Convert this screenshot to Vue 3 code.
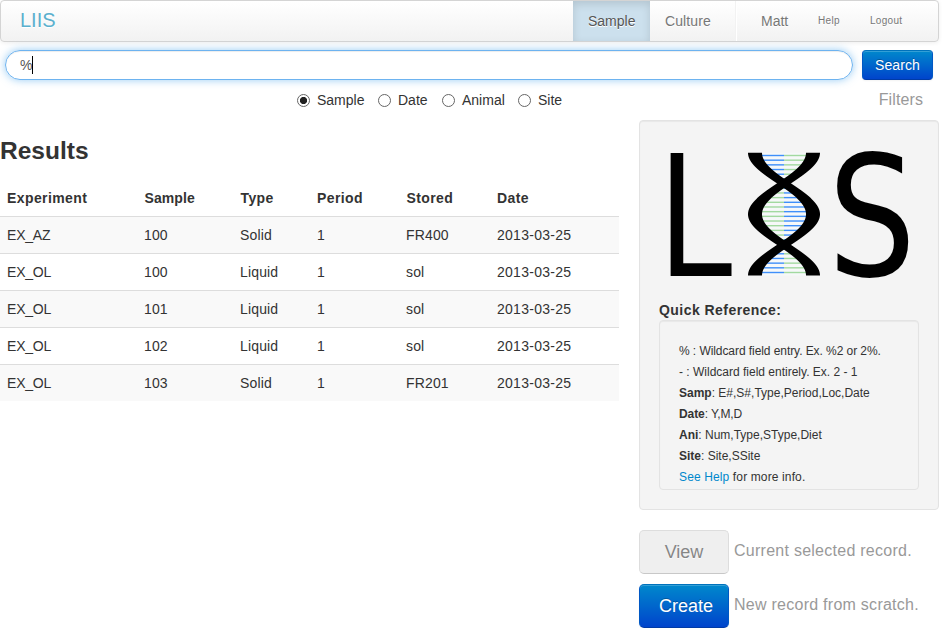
<script setup>
import { ref } from 'vue'

const query = ref('%')
const mode = ref('Sample')
const modes = ['Sample', 'Date', 'Animal', 'Site']
const columns = ['Experiment', 'Sample', 'Type', 'Period', 'Stored', 'Date']
const rows = [
  ['EX_AZ', '100', 'Solid', '1', 'FR400', '2013-03-25'],
  ['EX_OL', '100', 'Liquid', '1', 'sol', '2013-03-25'],
  ['EX_OL', '101', 'Liquid', '1', 'sol', '2013-03-25'],
  ['EX_OL', '102', 'Liquid', '1', 'sol', '2013-03-25'],
  ['EX_OL', '103', 'Solid', '1', 'FR201', '2013-03-25'],
]

// Helix geometry inside the 260x150 logo canvas
const cx = 125
const top = 12.8
const height = 122.7
const swing = (y) => 29 * Math.cos((2 * Math.PI * (y - top)) / height)

function strand(sign) {
  const left = []
  const right = []
  for (let i = 0; i <= 98; i++) {
    const y = top + (height * i) / 98
    const x = cx + sign * swing(y)
    left.push(`${(x - 7).toFixed(2)},${y.toFixed(2)}`)
    right.unshift(`${(x + 7).toFixed(2)},${y.toFixed(2)}`)
  }
  return [...left, ...right].join(' ')
}

function lens() {
  const a = []
  const b = []
  for (let i = 0; i <= 98; i++) {
    const y = top + (height * i) / 98
    a.push(`${(cx - Math.abs(swing(y))).toFixed(2)},${y.toFixed(2)}`)
    b.unshift(`${(cx + Math.abs(swing(y))).toFixed(2)},${y.toFixed(2)}`)
  }
  return [...a, ...b].join(' ')
}

const rungs = Array.from({ length: 26 }, (_, i) => {
  const y = 14.8 + i * 4.68
  const s = swing(y)
  return { y, w: Math.abs(s), left: s > 0 ? '#3f8ffa' : '#a2d9a0', right: s > 0 ? '#a2d9a0' : '#3f8ffa' }
})
</script>

<template>
  <div class="page">
    <nav class="navbar">
      <a class="brand">LIIS</a>
      <a class="tab active">Sample</a>
      <a class="tab culture">Culture</a>
      <span class="divider"></span>
      <a class="user">Matt</a>
      <a class="small help">Help</a>
      <a class="small logout">Logout</a>
    </nav>

    <div class="searchbar">
      <div class="query"><span>{{ query }}</span><i class="caret"></i></div>
      <button class="btn primary search">Search</button>
    </div>

    <div class="options">
      <div class="modes">
        <label v-for="m in modes" :key="m" :class="['mode', m.toLowerCase()]">
          <span class="dot" :class="{ on: m === mode }"></span><span>{{ m }}</span>
        </label>
      </div>
      <span class="filters">Filters</span>
    </div>

    <div class="main">
      <section class="results">
        <h2>Results</h2>
        <div class="row head">
          <span v-for="c in columns" :key="c" :class="'h-' + c.toLowerCase()">{{ c }}</span>
        </div>
        <div v-for="(r, i) in rows" :key="i" class="row" :class="{ odd: i % 2 === 0 }">
          <span v-for="(v, j) in r" :key="j">{{ v }}</span>
        </div>
      </section>

      <aside class="side">
        <div class="well">
          <svg class="logo" width="260" height="150" viewBox="0 0 260 150">
            <text class="letter" transform="translate(-3.2 136) scale(.885 1)">L</text>
            <polygon :points="lens()" fill="#f6f8f9" />
            <g v-for="(r, i) in rungs" :key="i">
              <rect :x="cx - r.w" :y="r.y" :width="r.w" height="1.4" :fill="r.left" />
              <rect :x="cx" :y="r.y" :width="r.w" height="1.4" :fill="r.right" />
            </g>
            <polygon :points="strand(1)" />
            <polygon :points="strand(-1)" />
            <text class="letter curved" transform="translate(169 136) scale(.824 1)">S</text>
          </svg>
          <h5>Quick Reference:</h5>
          <div class="well inner">
            <p class="l1">% : Wildcard field entry. Ex. %2 or 2%.</p>
            <p>- : Wildcard field entirely. Ex. 2 - 1</p>
            <p><b>Samp</b>: E#,S#,Type,Period,Loc,Date</p>
            <p class="l4"><b>Date</b>: Y,M,D</p>
            <p><b>Ani</b>: Num,Type,SType,Diet</p>
            <p><b>Site</b>: Site,SSite</p>
            <p class="l7"><a>See Help</a> for more info.</p>
          </div>
        </div>
        <div class="action">
          <button class="btn large disabled">View</button>
          <span class="note">Current selected record.</span>
        </div>
        <div class="action">
          <button class="btn large primary">Create</button>
          <span class="note">New record from scratch.</span>
        </div>
      </aside>
    </div>
  </div>
</template>

<style>
body { background: #fff; overflow: hidden; }
</style>

<style scoped>
.page { width: 939px; font: 14px/20px "Liberation Sans", Arial, sans-serif; color: #333; }
.page * { box-sizing: border-box; }
.navbar {
  display: flex; height: 42px; border: 1px solid #d4d4d4; border-radius: 4px; padding-left: 19px;
  background: linear-gradient(#fff, #f2f2f2); box-shadow: 0 1px 4px rgba(0, 0, 0, .067);
  line-height: 40px; color: #777; text-shadow: 0 1px 0 #fff;
}
.brand { width: 553px; font-size: 20px; line-height: 39px; color: #5bb0ce; }
.tab { width: 77px; padding-left: 15px; }
.tab.active { background: #cce0ed; color: #555; box-shadow: inset 0 3px 8px rgba(0, 0, 0, .125); }
.tab.culture { width: 85px; letter-spacing: .1px; }
.divider { width: 2px; border-left: 1px solid #f2f2f2; border-right: 1px solid #fff; }
.user { width: 81px; padding-left: 24px; }
.small { font-size: 10px; line-height: 39px; width: 52px; letter-spacing: .3px; }
.searchbar { display: flex; padding: 8px 6px 0 5px; gap: 9px; }
.query {
  display: flex; align-items: center; width: 848px; height: 30px; padding-left: 14px; border-radius: 15px;
  border: 1px solid #6db3f0; box-shadow: inset 0 1px 1px rgba(0, 0, 0, .075), 0 0 8px rgba(82, 168, 236, .6); color: #555;
}
.caret { width: 1px; height: 18px; background: #000; }
.btn { font-family: inherit; margin: 0; padding: 0; border-radius: 4px; text-align: center; }
.btn.primary {
  color: #fff; text-shadow: 0 -1px 0 rgba(0, 0, 0, .25); background: linear-gradient(#08c, #04c);
  border: 1px solid; border-color: #0072bc #0058c4 #003ba6;
  box-shadow: inset 0 1px 0 rgba(255, 255, 255, .2), 0 1px 2px rgba(0, 0, 0, .05);
}
.search { width: 71px; height: 30px; font-size: 14px; letter-spacing: .1px; }
.options { display: flex; justify-content: space-between; height: 40px; padding: 10px 16px 0 297px; }
.modes { display: flex; }
.mode { display: flex; align-items: center; gap: 7px; height: 20px; }
.sample { width: 81px; }
.date { width: 64px; }
.animal { width: 76px; }
.dot { width: 13px; height: 13px; border: 1px solid #666; border-radius: 50%; background: #fff; }
.dot.on { background: radial-gradient(circle, #222 3.2px, #fff 4px); }
.filters { font-size: 16px; line-height: 20px; letter-spacing: .1px; color: #999; }
.main { display: flex; gap: 20px; }
.results { width: 619px; }
h2 { margin: 21px 0 19px; font-size: 24.5px; line-height: 20px; height: 20px; }
.row {
  display: grid; grid-template-columns: 137px 96px 77px 89px 91px 1fr; height: 37px;
  border-top: 1px solid #ddd; padding: 8px 0 0 7px;
}
.row.odd { background: #f9f9f9; }
.row span:nth-child(1) { letter-spacing: -.2px; }
.row span:nth-child(2), .row span:nth-child(3) { letter-spacing: .15px; }
.row span:nth-child(5) { letter-spacing: .15px; }
.row span:nth-child(6) { letter-spacing: .27px; }
.row.head { border-top: 0; height: 36px; font-weight: bold; }
.row.head span { letter-spacing: .4px; }
.row.head .h-sample { letter-spacing: .1px; padding-left: .5px; }
.row.head .h-type { padding-left: .5px; }
.row.head .h-stored { padding-left: .5px; }
.side { width: 300px; }
.well {
  height: 390px; padding: 19px; background: #f4f4f4; border: 1px solid #e3e3e3; border-radius: 4px;
  box-shadow: inset 0 1px 1px rgba(0, 0, 0, .05);
}
.logo { display: block; height: 150px; overflow: visible; }
.letter { font: 172px "Open Sans", sans-serif; fill: #000; }
.letter.curved { font: 168px "DejaVu Sans", sans-serif; }
h5 { margin: 10px 0 0; font-size: 14px; line-height: 20px; letter-spacing: .45px; }
.well.inner { height: 170px; padding-top: 20px; font-size: 12px; line-height: 21px; }
p { margin: 0; white-space: nowrap; }
p a { color: #08c; }
.l1 { letter-spacing: -.07px; }
.l4 { letter-spacing: -.1px; }
.l7 { letter-spacing: .13px; }
.action { display: flex; height: 54px; gap: 5px; padding-top: 10px; font-size: 16px; color: #999; line-height: 42px; white-space: nowrap; }
.note { letter-spacing: .26px; }
.well + .action { height: 64px; padding-top: 20px; }
.large { width: 90px; height: 44px; border-radius: 5px; font-size: 18px; flex: none; }
.large.primary { padding-left: 4px; }
.disabled { background: #efefef; border: 1px solid #ddd; border-bottom-color: #c8c8c8; color: #868686; text-shadow: 0 1px 1px rgba(255, 255, 255, .75); }
</style>
